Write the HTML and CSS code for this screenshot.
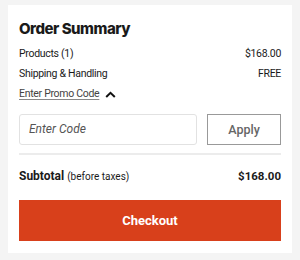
FILE: index.html
```html
<!DOCTYPE html>
<html>
<head>
<meta charset="utf-8">
<link rel="stylesheet" href="styles.css">
</head>
<body>
<div class="card">
  <h1 class="title">Order Summary</h1>
  <div class="row"><span>Products (1)</span><span>$168.00</span></div>
  <div class="row"><span>Shipping &amp; Handling</span><span>FREE</span></div>
  <div class="promo-toggle">
    <span class="promo-link">Enter Promo Code</span>
    <svg class="chev" width="11" height="7" viewBox="0 0 11 7"><path d="M1.2 6 L5.5 1.8 L9.8 6" fill="none" stroke="#111" stroke-width="2"/></svg>
  </div>
  <div class="promo-form">
    <div class="input">Enter Code</div>
    <div class="apply">Apply</div>
  </div>
  <div class="divider"></div>
  <div class="subtotal"><span><b>Subtotal</b> <small>(before taxes)</small></span><b class="price">$168.00</b></div>
  <div class="checkout">Checkout</div>
</div>
</body>
</html>
```
FILE: styles.css
```css
html, body { margin: 0; padding: 0; }
body {
  background: #f4f4f4;
  font-family: Roboto, "Noto Sans", sans-serif;
  color: #1a1a1a;
  width: 300px;
  height: 260px;
}
.card {
  margin: 5px 8px 0 8px;
  background: #fff;
  padding: 14px 11px 14px 11px;
  height: 220px;
}
.title {
  margin: 0 0 6px 0;
  font-family: Inter, Roboto, sans-serif;
  font-size: 15px;
  font-weight: 800;
  line-height: 19px;
  letter-spacing: -0.5px;
}
.row {
  display: flex;
  justify-content: space-between;
  font-size: 10.5px;
  letter-spacing: -0.3px;
  line-height: 20px;
}
.promo-toggle {
  display: flex;
  align-items: center;
  gap: 6px;
  font-size: 10.5px;
  letter-spacing: -0.3px;
  line-height: 20px;
  color: #444;
}
.promo-link { text-decoration: underline; text-underline-offset: 2px; text-decoration-color: #888; }
.promo-form {
  display: flex;
  gap: 10px;
  margin-top: 10px;
}
.input {
  flex: 1;
  height: 29px;
  border: 1px solid #e2e2e2;
  border-radius: 3px;
  font-style: italic;
  color: #555;
  font-size: 12px;
  line-height: 29px;
  padding-left: 9px;
}
.apply {
  width: 72px;
  height: 29px;
  border: 1px solid #999;
  color: #666;
  font-size: 12.5px;
  line-height: 29px;
  text-align: center;
  font-weight: 500;
}
.divider {
  height: 2px;
  background: #ececec;
  margin-top: 8px;
}
.subtotal {
  display: flex;
  justify-content: space-between;
  align-items: baseline;
  margin-top: 12px;
  font-size: 12px;
  line-height: 18px;
}
.subtotal b { font-weight: 700; }
.subtotal .price { font-size: 11.5px; }
.subtotal small { font-size: 10px; font-weight: 400; }
.checkout {
  margin-top: 14px;
  height: 41px;
  background: #d8401b;
  color: #fff;
  font-weight: 700;
  font-size: 13px;
  line-height: 41px;
  text-align: center;
}
```
